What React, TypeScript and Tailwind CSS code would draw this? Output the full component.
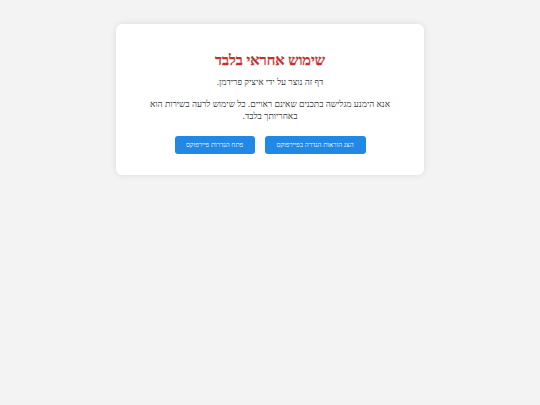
export default function App() {
  return (
    <div dir="rtl" className="min-h-[405px] w-full bg-[#f3f3f3] pt-[24px] font-['Noto_Sans']">
      <div className="mx-auto w-[308px] rounded-[6px] bg-white px-[20px] pt-[25px] pb-[21px] text-center shadow-[0_0_6px_rgba(0,0,0,0.1)]">
        <h1 className="text-[14.5px] font-bold leading-[20px] text-[#c5302e] [-webkit-text-stroke:0.25px_#c5302e]">שימוש אחראי בלבד</h1>
        <p className="mt-[7px] text-[8.8px] leading-[12px] text-[#333]">דף זה נוצר על ידי איציק פרידמן.</p>
        <p className="mt-[10px] text-[8.8px] leading-[12px] text-[#333]">אנא הימנע מגלישה בתכנים שאינם ראויים. כל שימוש לרעה בשירות הוא באחריותך בלבד.</p>
        <div className="mt-[14px] flex justify-center gap-[10px]">
          <button className="h-[18px] w-[101px] rounded-[3px] bg-[#2188e5] text-[6.8px] leading-[18px] text-white">הצג הוראות הגדרה בפיירפוקס</button>
          <button className="h-[18px] w-[80px] rounded-[3px] bg-[#2188e5] text-[6.8px] leading-[18px] text-white">פתח הגדרות פיירפוקס</button>
        </div>
      </div>
    </div>
  );
}
